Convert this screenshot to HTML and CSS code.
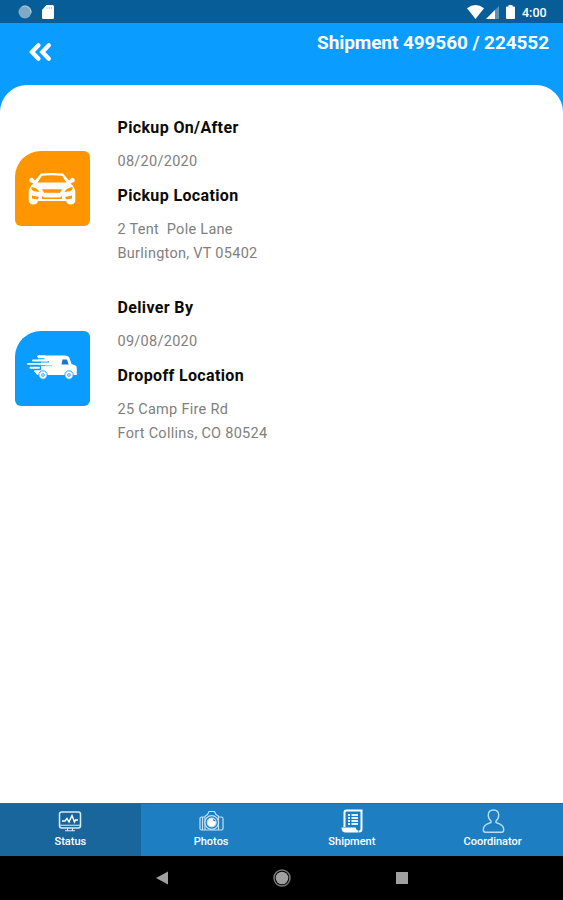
FILE: index.html
```html
<!DOCTYPE html>
<html lang="en">
<head>
<meta charset="utf-8">
<title>Shipment 499560 / 224552</title>
<link rel="stylesheet" href="styles.css">
</head>
<body>
<div class="screen">
  <div class="statusbar">
    <div class="notifications">
      <svg width="14" height="14" viewBox="0 0 14 14"><circle cx="7" cy="7" r="6.500" fill="#7fa9c4"/><path d="M2 3a6 6 0 0 0 9 9A6.300 6.300 0 0 1 2 3z" fill="#c6dae6"/><path d="M4 1.800A6 6 0 0 1 12.800 8" fill="none" stroke="#a9c8db" stroke-width="1.200"/></svg>
      <svg width="12" height="14" viewBox="0 0 12 14"><path d="M4.500 0H10.500Q12 0 12 1.500V12.500Q12 14 10.500 14H1.500Q0 14 0 12.500V5z" fill="#fff"/><path d="M5 2v2M7.300 2v2M9.500 2v2" stroke="#b9cddd" stroke-width="1"/></svg>
    </div>
    <div class="system">
      <svg class="wifi" width="17" height="14" viewBox="0 0 17 14"><path d="M0 3.200Q8.500-3 17 3.200L8.500 14z" fill="#fff"/></svg>
      <svg class="signal" width="13" height="13" viewBox="0 0 13 13"><path d="M13 0V13H0z" fill="#5c91b7"/><path d="M9 4V13H0z" fill="#fff"/></svg>
      <svg class="battery" width="9" height="14" viewBox="0 0 9 14"><path d="M2.500 0h4v1.500H8q1 0 1 1V13q0 1-1 1H1q-1 0-1-1V2.500q0-1 1-1h1.500z" fill="#fff"/></svg>
      <span class="clock">4:00</span>
    </div>
  </div>
  <header class="header">
    <svg class="back" width="24" height="20" viewBox="0 0 24 20"><path d="M10.500 3.200L4 10 10.500 16.800M20.800 3.200L14.300 10 20.800 16.800" fill="none" stroke="#fff" stroke-width="4.300" stroke-linecap="round"/></svg>
    <h1 class="title">Shipment 499560 / 224552</h1>
  </header>
  <main class="sheet">
    <section class="stop">
      <div class="tile pickup">
        <svg width="48" height="34" viewBox="0 0 48 34">
          <path fill="#fff" fill-rule="evenodd" d="M13 1.500Q24 .3 35 1.500L41 8.500 44 5.500Q48.500 7 46 10L42.500 11.500Q47 15 47.300 20V29Q46.500 32.500 42.500 32.500 39 32.500 38 29H10Q9 32.500 5.500 32.500 1.500 32.500 .7 29V20Q1 15 5.500 11.500L2 10Q-.5 7 4 5.500L7 8.500zM14 3.700L9.500 10.500H38.500L34 3.700Q24 2.700 14 3.700zM3.500 15Q3 18.500 6 19.200L11.500 20Q10 16 3.500 15zM44.500 15Q45 18.500 42 19.200L36.500 20Q38 16 44.500 15zM14 17.300L16 20.700H32L34 17.300zM14 24V27H34V24L32 25.500H16zM4 23.500V26.500L9.500 27.500 11 25zM44 23.500V26.500L38.500 27.500 37 25z"/>
        </svg>
      </div>
      <div class="details">
        <h2>Pickup On/After</h2>
        <p>08/20/2020</p>
        <h2>Pickup Location</h2>
        <p>2 Tent&nbsp; Pole Lane<br>Burlington, VT 05402</p>
      </div>
    </section>
    <section class="stop">
      <div class="tile delivery">
        <svg width="50" height="26" viewBox="0 0 50 26">
          <path d="M11 .5H38Q41.500 .5 42.500 3L44.500 9 48.500 10.500Q49.800 11 49.800 13V20H10L8 17H14V5H11z" fill="#fff"/>
          <path d="M35.500 4.500H40L41.700 9.500H34.500z" fill="#1b78c7"/>
          <path d="M9 3.900H17.500M5 6.800H22M1.500 10.500H18M3 14.300H14" stroke="#0a9cff" stroke-width="1.200"/>
          <path d="M11 1.500H18M6 5.500H20M1 8.900H25M3.500 12.700H12M8 16.300H16" stroke="#fff" stroke-width="1.900" stroke-linecap="round"/>
          <path d="M12 10.700H25" stroke="#64bdff" stroke-width=".8"/>
          <circle cx="16" cy="20" r="4.200" fill="#fff" stroke="#0a9cff" stroke-width=".9"/><circle cx="42" cy="20" r="4.200" fill="#fff" stroke="#0a9cff" stroke-width=".9"/>
          <circle cx="16" cy="20" r="1.600" fill="#9bd4ff" stroke="#43afff" stroke-width=".7"/><circle cx="42" cy="20" r="1.600" fill="#9bd4ff" stroke="#43afff" stroke-width=".7"/>
        </svg>
      </div>
      <div class="details">
        <h2>Deliver By</h2>
        <p>09/08/2020</p>
        <h2>Dropoff Location</h2>
        <p>25 Camp Fire Rd<br>Fort Collins, CO 80524</p>
      </div>
    </section>
  </main>
  <nav class="tabs">
    <div class="tab active">
      <svg width="26" height="26" viewBox="0 0 26 26" fill="none" stroke="#d9eafa" stroke-width="1.500"><rect x="2.500" y="4" width="21" height="16" rx="2.200"/><path d="M3 17.300H23M10.500 20v2.500M15.500 20v2.500M8 22.700H18" stroke-width="1.100"/><path d="M5 13H8L10 10.500 12 14 15 7.500 17.500 14 18.500 12H21" stroke="#fff" stroke-width="1.400"/></svg>
      <span>Status</span>
    </div>
    <div class="tab">
      <svg width="26" height="26" viewBox="0 0 26 26" fill="none" stroke="#c4e1f8" stroke-width="1.200"><path d="M7 22V8.500Q7 7.500 8 7.500L9.500 6.500 11 3.500H16.500L18 6.500 19.500 7.500Q20.500 7.500 20.500 8.500V22zM7 9H3.500Q2 9 2 10.500V20.500Q2 22 3.500 22H7M20.500 9H23.500Q25 9 25 10.500V20.500Q25 22 23.500 22H20.500M4.500 9V22"/><circle cx="13.700" cy="14.500" r="6.800" fill="#1d7ec1"/><circle cx="13.700" cy="14.500" r="4.400" fill="#fff"/><path d="M15 11.500L17 13" stroke="#1d7ec1"/></svg>
      <span>Photos</span>
    </div>
    <div class="tab">
      <svg width="26" height="26" viewBox="0 0 26 26" fill="none" stroke="#fff" stroke-width="2"><path d="M5.500 19V4.500Q5.500 2.500 7.500 2.500H22.500V21Q22.500 23.500 20 23.500"/><path d="M2.500 19.500H16.500Q17 22 19.500 22.500V24.500H6Q2.500 24 2.500 19.500z" fill="#fff" stroke="none"/><path d="M9 7H11M9 10H11M9 13H11M9 16H11" stroke="#e4f2fc" stroke-width="2"/><path d="M12.500 7H19M12.500 10H19M12.500 13H19M12.500 16H19" stroke="#e4f2fc" stroke-width="2"/></svg>
      <span>Shipment</span>
    </div>
    <div class="tab">
      <svg width="26" height="26" viewBox="0 0 26 26" fill="none" stroke="#b8dcf7" stroke-width="1.400"><path d="M11 13Q8.300 11 8.300 7.300 8.300 2 13.500 2 18.700 2 18.700 7.300 18.700 11 16 13V14.500L20 16.200Q23.700 18 23.700 21.800 23.700 24.300 21.700 24.300H5.300Q3.300 24.300 3.300 21.800 3.300 18 7 16.200L11 14.500z"/></svg>
      <span>Coordinator</span>
    </div>
  </nav>
  <div class="navbar">
    <svg width="12" height="14" viewBox="0 0 12 14"><path d="M12 .5V13.500L0 7z" fill="#a0a0a0"/></svg>
    <svg width="18" height="18" viewBox="0 0 18 18"><circle cx="9" cy="9" r="8" fill="none" stroke="#777" stroke-width="1.500"/><circle cx="9" cy="9" r="6.300" fill="#a0a0a0"/></svg>
    <svg width="12" height="12" viewBox="0 0 12 12"><rect width="12" height="12" fill="#a0a0a0"/></svg>
  </div>
</div>
</body>
</html>
```
FILE: styles.css
```css
* { box-sizing: border-box; }

body {
  margin: 0;
  font-family: Roboto, "Liberation Sans", sans-serif;
}

svg { display: block; flex: none; }

.screen {
  display: flex;
  flex-direction: column;
  height: 900px;
  background: #0a9cff;
  overflow: hidden;
}

.statusbar {
  display: flex;
  justify-content: space-between;
  height: 23px;
  flex: none;
  padding: 5px 15px 0 18px;
  background: #075d97;
}

.notifications { display: flex; gap: 10px; }

.system { display: flex; }

.wifi { margin-right: 2px; }
.signal { margin: 1px 7px 0 0; }
.battery { margin-right: 7px; }

.clock {
  width: 26px;
  font-size: 12.5px;
  font-weight: 500;
  line-height: 15px;
  color: #fff;
  white-space: nowrap;
}

.header {
  display: flex;
  justify-content: space-between;
  align-items: flex-start;
  height: 62px;
  flex: none;
  padding: 8px 14px 0 28px;
}

.back { margin-top: 11px; }

.title {
  margin: 0;
  font-size: 19px;
  font-weight: 700;
  line-height: 24px;
  letter-spacing: -0.08px;
  color: #fff;
}

.sheet {
  flex: 1;
  padding: 31px 15px 0 14.5px;
  background: #fff;
  border-radius: 27px 27px 0 0;
}

.stop {
  display: flex;
  gap: 28px;
  height: 179.5px;
}

.tile {
  display: flex;
  align-items: center;
  justify-content: center;
  width: 75px;
  height: 75px;
  margin-top: 35px;
  border-radius: 26px 6px 6px 6px;
}

.pickup { background: #ff9500; }
.delivery { background: #0a9cff; }

.details h2 {
  margin: 0 0 10px;
  font-size: 16px;
  font-weight: 700;
  line-height: 24px;
  letter-spacing: 0.36px;
  color: #0a0a0a;
}

.details p {
  margin: 0 0 10px;
  font-size: 14.5px;
  line-height: 24px;
  letter-spacing: 0.28px;
  color: #808080;
}

.tabs {
  display: grid;
  grid-template-columns: repeat(4, 1fr);
  height: 53px;
  flex: none;
  background: #1d7ec1;
  border-top: 1px solid #1670b0;
}

.tab {
  display: flex;
  flex-direction: column;
  align-items: center;
  padding-top: 4px;
  font-size: 11px;
  line-height: 14px;
  font-weight: 500;
  color: #fff;
}

.tab span { margin-top: 1px; }

.active { background: #19669c; }

.navbar {
  display: flex;
  align-items: center;
  justify-content: center;
  gap: 105px;
  height: 44px;
  flex: none;
  background: #000;
}
```
